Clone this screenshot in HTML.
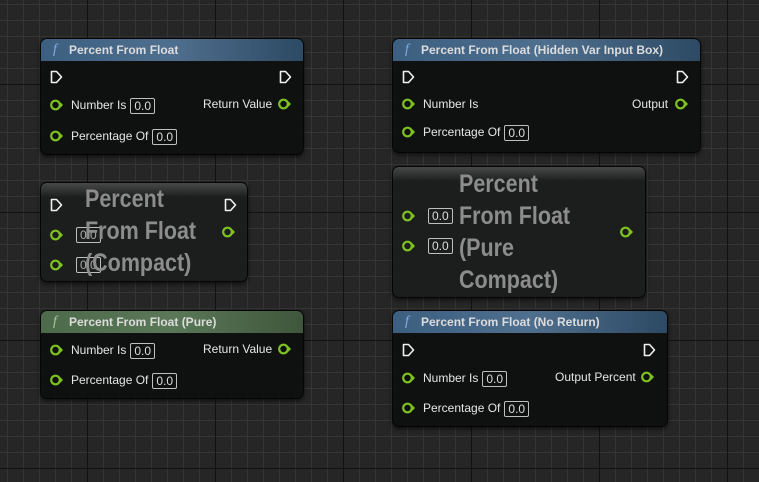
<!DOCTYPE html>
<html><head><meta charset="utf-8"><style>
*{margin:0;padding:0;box-sizing:border-box}
body{width:759px;height:482px;overflow:hidden;position:relative;font-family:"Liberation Sans",sans-serif;
background-color:#262626;
background-image:
linear-gradient(to right,#121212 1px,transparent 1px),
linear-gradient(to bottom,#121212 1px,transparent 1px),
linear-gradient(to right,#353535 1px,transparent 1px),
linear-gradient(to bottom,#353535 1px,transparent 1px);
background-size:128px 128px,128px 128px,16px 16px,16px 16px;
background-position:87px 84px,87px 84px,7px 4px,7px 4px;}
.n{position:absolute;background:rgba(14,16,15,0.94);border:1px solid #050505;border-radius:7px;box-shadow:0 2px 4px rgba(0,0,0,.6);overflow:hidden}
.h{position:absolute;left:0;right:0;top:0;height:23px;color:#dcdcdc;font-weight:bold;font-size:12px;line-height:22px;padding-left:28px;white-space:nowrap}
.hb{background:linear-gradient(to right,#3c5f80,#4f6f8e 50%,#2d4a64);border-bottom:1px solid #111}
.hg{background:linear-gradient(to right,#4d6a4a,#5a7858 50%,#3f563c);border-bottom:1px solid #111}
.h i{position:absolute;left:12px;top:0;font-family:"Liberation Serif",serif;font-style:italic;font-weight:normal;color:#7fb0dd;font-size:14px}
.hg i{color:#a8c8a0}
.hc{position:absolute;left:0;right:0;top:0;height:14px;background:linear-gradient(#484848,#262727 80%,transparent)}
.t{position:absolute;color:#e6e6e6;font-size:12px;white-space:nowrap;line-height:14px}
.b{display:inline-block;border:1px solid #bfbfbf;border-radius:2px;padding:0 3px;height:16px;line-height:14px;margin-left:4px;vertical-align:middle;color:#ddd}
svg{position:absolute}
.ct{position:absolute;color:#8c8c8c;font-weight:bold;font-size:25px;line-height:32px;font-family:"Liberation Sans Narrow","Liberation Sans",sans-serif;transform:scaleX(.86);transform-origin:0 0;white-space:nowrap}
</style></head><body>
<svg width="0" height="0"><defs>
<g id="p"><circle cx="5.5" cy="6" r="4.3" fill="none" stroke="#7ec21f" stroke-width="2.2"/><path d="M10.5 3.3L13 6L10.5 8.7Z" fill="#7ec21f"/></g>
<g id="e"><path d="M1.5 1.5H6.5L11.5 7L6.5 12.5H1.5Z" fill="none" stroke="#f0f0f0" stroke-width="1.6" stroke-linejoin="round"/></g>
</defs></svg>

<div class="n" style="left:40px;top:38px;width:264px;height:117px">
<div class="h hb"><i>f</i>Percent From Float</div></div>
<svg style="left:50px;top:70px" width="14" height="15"><use href="#e"/></svg>
<svg style="left:279px;top:70px" width="14" height="15"><use href="#e"/></svg>
<svg style="left:50px;top:99px" width="14" height="12"><use href="#p"/></svg>
<div class="t" style="left:71px;top:98px">Number Is<span class="b">0.0</span></div>
<div class="t" style="left:203px;top:97px">Return Value</div>
<svg style="left:278px;top:98px" width="14" height="12"><use href="#p"/></svg>
<svg style="left:50px;top:130px" width="14" height="12"><use href="#p"/></svg>
<div class="t" style="left:71px;top:129px">Percentage Of<span class="b">0.0</span></div>

<div class="n" style="left:392px;top:38px;width:309px;height:115px">
<div class="h hb"><i>f</i>Percent From Float (Hidden Var Input Box)</div></div>
<svg style="left:402px;top:70px" width="14" height="15"><use href="#e"/></svg>
<svg style="left:676px;top:70px" width="14" height="15"><use href="#e"/></svg>
<svg style="left:402px;top:98px" width="14" height="12"><use href="#p"/></svg>
<div class="t" style="left:423px;top:97px">Number Is</div>
<div class="t" style="left:632px;top:97px">Output</div>
<svg style="left:675px;top:98px" width="14" height="12"><use href="#p"/></svg>
<svg style="left:402px;top:126px" width="14" height="12"><use href="#p"/></svg>
<div class="t" style="left:423px;top:125px">Percentage Of<span class="b">0.0</span></div>

<div class="n" style="left:40px;top:182px;width:208px;height:100px;background:rgba(28,29,29,.96)"><div class="hc"></div></div>
<svg style="left:50px;top:198px" width="14" height="15"><use href="#e"/></svg>
<svg style="left:224px;top:198px" width="14" height="15"><use href="#e"/></svg>
<svg style="left:50px;top:229px" width="14" height="12"><use href="#p"/></svg>
<svg style="left:222px;top:226px" width="14" height="12"><use href="#p"/></svg>
<svg style="left:50px;top:259px" width="14" height="12"><use href="#p"/></svg>
<div class="t" style="left:72px;top:227px"><span class="b" style="color:#aaa">0.0</span></div>
<div class="t" style="left:72px;top:257px"><span class="b" style="color:#aaa">0.0</span></div>
<div class="ct" style="left:85px;top:183px">Percent<br>From Float<br>(Compact)</div>

<div class="n" style="left:392px;top:166px;width:254px;height:132px;background:rgba(28,29,29,.96)"><div class="hc"></div></div>
<svg style="left:402px;top:210px" width="14" height="12"><use href="#p"/></svg>
<svg style="left:402px;top:240px" width="14" height="12"><use href="#p"/></svg>
<svg style="left:620px;top:226px" width="14" height="12"><use href="#p"/></svg>
<div class="t" style="left:424px;top:208px"><span class="b">0.0</span></div>
<div class="t" style="left:424px;top:238px"><span class="b">0.0</span></div>
<div class="ct" style="left:459px;top:168px">Percent<br>From Float<br>(Pure<br>Compact)</div>

<div class="n" style="left:40px;top:310px;width:264px;height:89px">
<div class="h hg"><i>f</i>Percent From Float (Pure)</div></div>
<svg style="left:50px;top:344px" width="14" height="12"><use href="#p"/></svg>
<div class="t" style="left:71px;top:343px">Number Is<span class="b">0.0</span></div>
<div class="t" style="left:203px;top:342px">Return Value</div>
<svg style="left:278px;top:343px" width="14" height="12"><use href="#p"/></svg>
<svg style="left:50px;top:374px" width="14" height="12"><use href="#p"/></svg>
<div class="t" style="left:71px;top:373px">Percentage Of<span class="b">0.0</span></div>

<div class="n" style="left:392px;top:310px;width:276px;height:117px">
<div class="h hb"><i>f</i>Percent From Float (No Return)</div></div>
<svg style="left:402px;top:343px" width="14" height="15"><use href="#e"/></svg>
<svg style="left:643px;top:343px" width="14" height="15"><use href="#e"/></svg>
<svg style="left:402px;top:372px" width="14" height="12"><use href="#p"/></svg>
<div class="t" style="left:423px;top:371px">Number Is<span class="b">0.0</span></div>
<div class="t" style="left:555px;top:370px">Output Percent</div>
<svg style="left:641px;top:371px" width="14" height="12"><use href="#p"/></svg>
<svg style="left:402px;top:402px" width="14" height="12"><use href="#p"/></svg>
<div class="t" style="left:423px;top:401px">Percentage Of<span class="b">0.0</span></div>
</body></html>
